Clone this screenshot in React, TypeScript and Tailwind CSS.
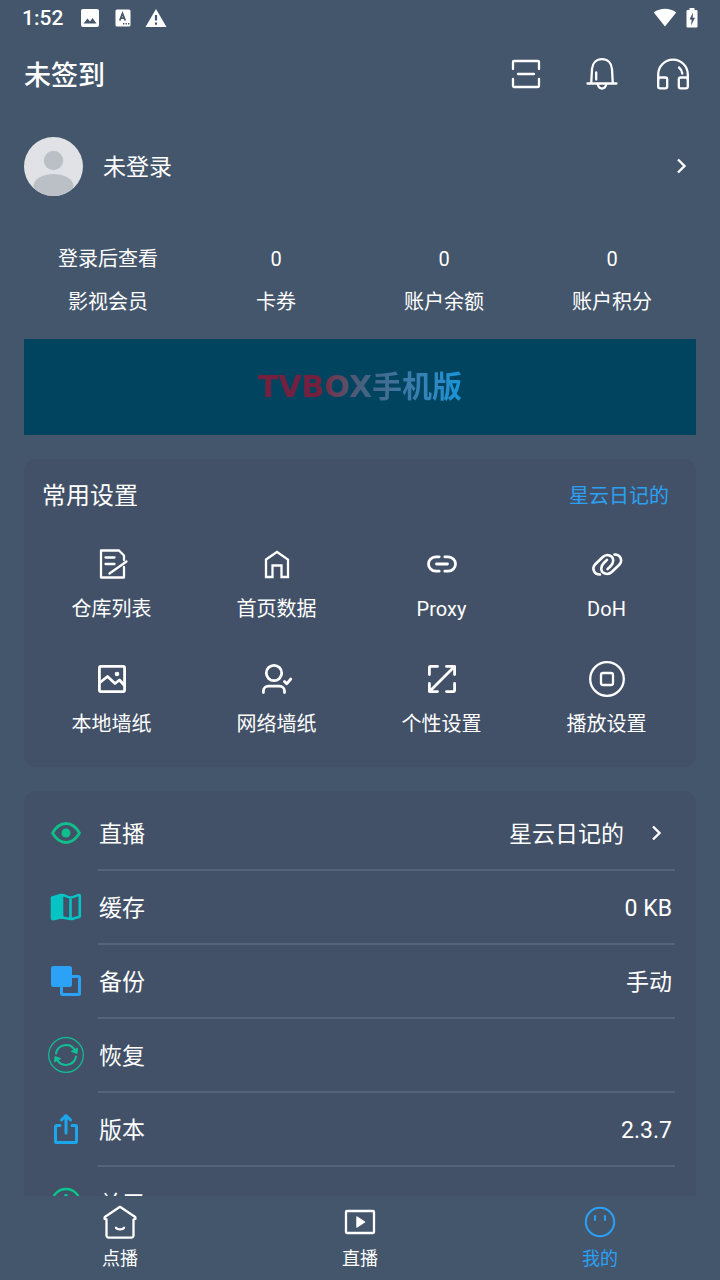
import React, { useState } from 'react';

interface IconProps {
  children: React.ReactNode;
  stroke?: number;
  className?: string;
}

function Icon({ children, stroke = 2.3, className = '' }: IconProps) {
  return (
    <svg
      viewBox="0 0 36 36"
      className={`size-9 shrink-0 ${className}`}
      fill="none"
      stroke="currentColor"
      strokeWidth={stroke}
      strokeLinecap="round"
      strokeLinejoin="round"
      aria-hidden="true"
    >
      {children}
    </svg>
  );
}

function Chevron() {
  return (
    <svg viewBox="0 0 12 18" className="h-[18px] w-3 shrink-0" fill="none" stroke="currentColor" strokeWidth="2.4" aria-hidden="true">
      <path d="M2 2.500l6.500 6.500-6.500 6.500" />
    </svg>
  );
}

const stats = [
  { value: '登录后查看', label: '影视会员' },
  { value: '0', label: '卡券' },
  { value: '0', label: '账户余额' },
  { value: '0', label: '账户积分' },
];

const shortcuts = [
  {
    label: '仓库列表',
    icon: (
      <Icon>
        <path d="M30 14V9.5L25 4.5H7V31.5H30V21" />
        <path d="M11.5 11.5H20.5M11.5 18H20.5M15.5 27.5L32.5 15.5" />
      </Icon>
    ),
  },
  {
    label: '首页数据',
    icon: (
      <Icon>
        <path d="M7 13.5L18 6l11 7.5V31H22.5V19.5h-9V31H7z" strokeLinejoin="miter" />
      </Icon>
    ),
  },
  {
    label: 'Proxy',
    icon: (
      <Icon stroke={2.8}>
        <path d="M15.2 10.8H11.7a7.2 7.2 0 0 0 0 14.4H15.2M20.8 10.8H24.3a7.2 7.2 0 0 1 0 14.4H20.8M12.5 18H23.5" />
      </Icon>
    ),
  },
  {
    label: 'DoH',
    icon: (
      <Icon stroke={2.6}>
        <path d="M11 28.5C4.5 28.5 2.5 22 6.5 18L13.5 11.2C18 7 24.2 9.5 24.2 14.5c0 2.5-1 4-2.5 5.5l-3.2 3.2" />
        <path d="M25.5 8.5C32 8.5 34 15 30 19L23 25.8C18.5 30 12.3 27.5 12.3 22.5c0-2.5 1-4 2.5-5.5l3.2-3.2" />
      </Icon>
    ),
  },
  {
    label: '本地墙纸',
    icon: (
      <Icon stroke={2.8}>
        <rect x="5.4" y="5.4" width="25.2" height="25.2" rx="1.5" />
        <path d="M6 21.5L13.5 15.5L21 22.5L25.5 19L30 24" />
        <circle cx="23" cy="13" r="2.3" fill="currentColor" stroke="none" />
      </Icon>
    ),
  },
  {
    label: '网络墙纸',
    icon: (
      <Icon stroke={2.8}>
        <circle cx="15" cy="12" r="7.7" />
        <path d="M4.4 31.5V30a5 5 0 0 1 5-4.8H20.5a5 5 0 0 1 5 4.8V31.5M25.5 20.5L27.7 22.8L31.8 18" />
      </Icon>
    ),
  },
  {
    label: '个性设置',
    icon: (
      <Icon stroke={2.8}>
        <path d="M13.5 5.4H6.4a1 1 0 0 0-1 1V13.5M22.5 5.4H30.6V13.5M13.5 30.6H5.4V22.5M22.5 30.6H29.6a1 1 0 0 0 1-1V22.5M6 30L30 6" />
      </Icon>
    ),
  },
  {
    label: '播放设置',
    icon: (
      <Icon>
        <circle cx="18" cy="18" r="16.8" />
        <rect x="12" y="12" width="12" height="12" rx="2" />
      </Icon>
    ),
  },
];

const rows = [
  {
    label: '直播',
    value: '星云日记的',
    arrow: true,
    icon: (
      <Icon className="text-[#10bf8b]" stroke={2.8}>
        <path d="M4.5 18C8 12 12.5 8.5 18 8.5S28 12 31.5 18C28 24 23.5 27.500 18 27.500S8 24 4.500 18z" />
        <circle cx="18" cy="18" r="4.5" fill="currentColor" stroke="none" />
      </Icon>
    ),
  },
  {
    label: '缓存',
    value: '0 KB',
    icon: (
      <Icon className="text-[#06c4c4]" stroke={2.6}>
        <path d="M4 8.5C8 8 10 6 14 6V28.5C10 28.5 8 30 5 30.3C4.3 30.3 4 30 4 29.5z" fill="currentColor" />
        <path d="M14 6C17 6 19 8.5 22.5 8.5S28 6.5 31 6C31.5 6 31.8 6.3 31.8 7V27C31.8 27.7 31.3 28.2 30.5 28.3C27 28.7 25.5 30 22.5 30S17 28.5 14 28.5M22.5 8.5V30" />
      </Icon>
    ),
  },
  {
    label: '备份',
    value: '手动',
    icon: (
      <Icon className="text-[#2ba1f8]" stroke={3}>
        <rect x="3" y="3" width="21" height="21" rx="2.5" fill="currentColor" stroke="none" />
        <path d="M24 13.5H30.5a1 1 0 0 1 1 1V30.5a1 1 0 0 1-1 1H14.5a1 1 0 0 1-1-1V24" strokeLinecap="butt" />
      </Icon>
    ),
  },
  {
    label: '恢复',
    value: '',
    icon: (
      <Icon className="text-[#10c095]">
        <circle cx="18" cy="18" r="17.3" strokeWidth="1.2" />
        <path d="M8 16.5A10.2 10.2 0 0 1 27 13.5M28 19.5A10.2 10.2 0 0 1 9 22.5" strokeWidth="2" />
        <path d="M23.5 14.5L29 16.5L29.5 11.5zM12.5 21.5L7 19.5L6.5 24.5z" fill="currentColor" strokeWidth="1" />
      </Icon>
    ),
  },
  {
    label: '版本',
    value: '2.3.7',
    icon: (
      <Icon className="text-[#1ca6ec]" stroke={3}>
        <path d="M12 14.5H8.5a1 1 0 0 0-1 1V30.500a1 1 0 0 0 1 1H27.500a1 1 0 0 0 1-1V15.500a1 1 0 0 0-1-1H24M18 22V5M13.500 9L18 4.500L22.500 9" />
      </Icon>
    ),
  },
  {
    label: '关于',
    value: '',
    icon: (
      <Icon className="text-[#0bc48e]">
        <circle cx="18" cy="18" r="14" />
        <circle cx="18" cy="10.5" r="1.8" fill="currentColor" stroke="none" />
        <path d="M18 15.5V25.5" />
      </Icon>
    ),
  },
];

const tabs = [
  {
    label: '点播',
    icon: (
      <Icon>
        <path d="M4.500 15.500L2.500 14.800L2.800 13L18 2.800L33.200 13L33.500 14.800L31.500 15.500V31.500a2.200 2.200 0 0 1-2.200 2.200H6.700a2.200 2.200 0 0 1-2.200-2.200V15.500" />
        <path d="M14 23.800c1.300 2 6.700 2 8 0" />
      </Icon>
    ),
  },
  {
    label: '直播',
    icon: (
      <Icon>
        <rect x="4" y="7" width="28" height="22" rx="1" />
        <path d="M15 13L22.5 18L15 23z" fill="currentColor" strokeWidth="1.5" />
      </Icon>
    ),
  },
  {
    label: '我的',
    icon: (
      <Icon stroke={2}>
        <circle cx="18" cy="18" r="14.2" />
        <path d="M13 12V16M23 12V16" />
      </Icon>
    ),
  },
];

function StatusBar() {
  return (
    <div className="flex h-9 shrink-0 items-center px-[22px]">
      <span className="text-[21px] leading-6 font-medium">1:52</span>
      <svg viewBox="0 0 18 18" className="ml-[18px] size-[18px]" aria-hidden="true">
        <rect width="18" height="18" rx="2" fill="#fff" />
        <path d="M2.5 14.5L6.5 9.5L9 12.5L11.5 9L15.5 14.5z" fill="#44566c" />
      </svg>
      <svg viewBox="0 0 16 18" className="ml-4 h-[18px] w-4" aria-hidden="true">
        <rect x="0.5" y="0.5" width="15" height="17" rx="1.5" fill="#fff" />
        <path d="M4.800 11.500L7.500 4.500L10.200 11.500M5.800 9.200H9.200" fill="none" stroke="#44566c" strokeWidth="1.800" />
        <path d="M8 14.800h1.400M10.500 14.800h1.400M13 14.800h1.400" stroke="#44566c" strokeWidth="1.400" />
      </svg>
      <svg viewBox="0 0 22 20" className="ml-[14px] h-5 w-[22px]" aria-hidden="true">
        <path d="M11 1L21.5 19H0.5z" fill="#fff" />
        <path d="M11 7v5.500M11 14.500v2.300" stroke="#44566c" strokeWidth="2.200" />
      </svg>
      <svg viewBox="0 0 24 20" className="ml-auto h-5 w-6" aria-hidden="true">
        <path d="M0.8 4.500C7 -0.400 17 -0.400 23.200 4.500L12 18.500z" fill="#fff" />
      </svg>
      <svg viewBox="0 0 12 20" className="ml-[9px] h-5 w-3" aria-hidden="true">
        <path d="M3.5 0h5v2H10.500a1 1 0 0 1 1 1V18.500a1 1 0 0 1-1 1h-9a1 1 0 0 1-1-1V3a1 1 0 0 1 1-1H3.500z" fill="#fff" />
        <path d="M7 4.500L3.500 11.500H5.700L5 17.500L9 9.800H6.700z" fill="#44566c" />
      </svg>
    </div>
  );
}

export default function App() {
  const [activeTab, setActiveTab] = useState('我的');

  return (
    <div className="flex h-screen flex-col bg-[#44566c] font-['Roboto','Noto_Sans_CJK_SC',sans-serif] text-white">
      <StatusBar />

      <header className="flex h-[76px] shrink-0 items-center pr-[29px] pl-6">
        <h1 className="pt-1 text-[27px] leading-9 font-medium">未签到</h1>
        <button type="button" aria-label="扫一扫" className="ml-auto">
          <Icon>
            <path d="M5 13V6a1 1 0 0 1 1-1H30a1 1 0 0 1 1 1V13M5 23V30a1 1 0 0 0 1 1H30a1 1 0 0 0 1-1V23M10 18H26" />
          </Icon>
        </button>
        <button type="button" aria-label="通知" className="ml-10">
          <Icon>
            <path d="M7.2 27.5L8 13C8.5 7 12.5 3.2 18 3.2S27.5 7 28 13L28.8 27.5M3.5 27.5H32.5M12.2 16.500V23.500M13.800 28.500c.700 2.500 2.200 4 4.200 4s3.500-1.500 4.200-4" />
          </Icon>
        </button>
        <button type="button" aria-label="客服" className="ml-[35px]">
          <Icon>
            <path d="M3.2 24V18.5a14.8 14.8 0 0 1 29.6 0V24M24 11.5c2 1.5 3 3.5 3.3 6" />
            <rect x="3.2" y="21.5" width="9" height="10.8" rx="1.8" />
            <rect x="23.8" y="21.5" width="9" height="10.8" rx="1.8" />
          </Icon>
        </button>
      </header>

      <main className="min-h-0 flex-1 overflow-hidden px-6 pt-6">
        <button type="button" className="flex w-full items-center pr-2 text-left">
          <svg viewBox="0 0 60 60" className="size-[60px] shrink-0" aria-hidden="true">
            <defs>
              <clipPath id="avatar">
                <circle cx="29.5" cy="30.5" r="29.5" />
              </clipPath>
            </defs>
            <g clipPath="url(#avatar)">
              <rect width="60" height="60" fill="#e0e2e5" />
              <circle cx="29.5" cy="24.5" r="9.7" fill="#bbbfc6" />
              <ellipse cx="29.5" cy="50" rx="20" ry="12" fill="#bbbfc6" />
            </g>
          </svg>
          <span className="ml-[19px] flex-1 pt-1 text-[23px] leading-9">未登录</span>
          <Chevron />
        </button>

        <dl className="mt-[49px] grid grid-cols-4 text-center text-xl leading-7">
          {stats.map((stat) => (
            <div key={stat.label} className="flex flex-col-reverse gap-[15px]">
              <dt>{stat.label}</dt>
              <dd>{stat.value}</dd>
            </div>
          ))}
        </dl>

        <div className="mt-[23px] flex h-24 items-center justify-center bg-[#004460]">
          <span className="bg-linear-to-r from-[#75203e] from-30% via-[#46607c] via-50% to-[#1296db] bg-clip-text font-['DejaVu_Sans','Noto_Sans_CJK_SC',sans-serif] text-3xl leading-10 font-bold text-transparent">
            TVBOX手机版
          </span>
        </div>

        <section className="mt-6 rounded-xl bg-[#425167] pt-[19px] pb-[29px]">
          <div className="flex items-center justify-between pr-[27px] pl-[18px]">
            <h2 className="text-2xl leading-9">常用设置</h2>
            <a href="#source" className="text-xl leading-7 text-[#2aa1f7]">星云日记的</a>
          </div>
          <div className="mt-8 grid grid-cols-4 gap-y-[38px] pr-[7px] pl-[5px]">
            {shortcuts.map((item) => (
              <button key={item.label} type="button" className="flex flex-col items-center gap-[13px] text-xl leading-7">
                {item.icon}
                <span>{item.label}</span>
              </button>
            ))}
          </div>
        </section>

        <section className="mt-6 rounded-xl bg-[#425167] pt-[6px] pr-[21px] pl-6 text-[23px] leading-9">
          {rows.map((row) => (
            <button key={row.label} type="button" className="flex w-full items-center gap-[14px] text-left">
              <span className="pb-0.5">{row.icon}</span>
              <span className="flex h-[74px] flex-1 items-center border-b-2 border-[#55647a] pr-[3px] pl-px">
                <span className="flex-1 pt-1">{row.label}</span>
                <span className="pt-1">{row.value}</span>
                {row.arrow && (
                  <span className="mr-[9px] ml-[27px]">
                    <Chevron />
                  </span>
                )}
              </span>
            </button>
          ))}
        </section>
      </main>

      <nav className="grid shrink-0 grid-cols-3 pt-2 pb-[9px]">
        {tabs.map((tab) => (
          <button
            key={tab.label}
            type="button"
            onClick={() => setActiveTab(tab.label)}
            className={`flex flex-col items-center gap-[7px] text-lg leading-6 ${
              activeTab === tab.label ? 'text-[#2aa1f7]' : 'text-white'
            }`}
          >
            {tab.icon}
            <span>{tab.label}</span>
          </button>
        ))}
      </nav>
    </div>
  );
}
